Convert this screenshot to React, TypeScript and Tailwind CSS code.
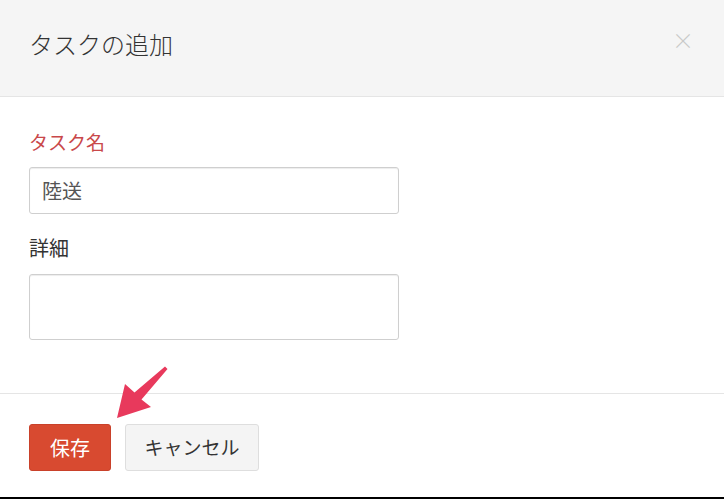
import React from 'react';

const jp = { fontFamily: '"Noto Sans CJK JP", "Noto Sans", sans-serif' };

function PointerArrow() {
  return (
    <svg
      className="absolute left-0 top-0 pointer-events-none"
      width="724"
      height="499"
      viewBox="0 0 724 499"
    >
      <polygon
        points="117,418 125,384 134.5,392.5 165,366.5 167.5,369 141.5,399.5 151,407"
        fill="#e8395c"
      />
    </svg>
  );
}

function App() {
  return (
    <div
      className="relative w-[724px] h-[499px] bg-white flex flex-col border-b-2 border-black overflow-hidden"
      style={jp}
    >
      {/* Header */}
      <header className="h-[97px] shrink-0 bg-[#f5f5f5] border-b border-[#e5e5e5] flex items-start justify-between pl-[29px] pr-[30px]">
        <h1 className="mt-[27px] text-[24px] leading-[34px] font-light text-[#333]">
          タスクの追加
        </h1>
        <button className="mt-[24px] text-[22px] leading-[30px] text-[#c8c8c8] font-light">
          ×
        </button>
      </header>

      {/* Body */}
      <div className="flex-1 pl-[29px] pt-[31px]">
        <label className="block text-[19px] leading-[28px] text-[#c9484a]">タスク名</label>
        <div className="mt-[11px] w-[370px] h-[47px] border border-[#cfcfcf] rounded-[3px] shadow-[inset_0_1px_1px_rgba(0,0,0,0.075)] flex items-center px-[12px] text-[20px] text-[#555]">
          陸送
        </div>
        <label className="block mt-[19px] text-[20px] leading-[29px] text-[#333]">詳細</label>
        <div className="mt-[12px] w-[370px] h-[66px] border border-[#cfcfcf] rounded-[3px] shadow-[inset_0_1px_1px_rgba(0,0,0,0.075)]" />
      </div>

      {/* Footer */}
      <footer className="h-[104px] shrink-0 border-t border-[#e5e5e5] pl-[29px] pt-[30px] flex items-start gap-[14px]">
        <button className="w-[82px] h-[47px] rounded-[3px] bg-[#d84a30] border border-[#c9412a] text-white text-[20px]">
          保存
        </button>
        <button className="w-[134px] h-[47px] rounded-[3px] bg-[#f4f4f4] border border-[#dedede] text-[#333] text-[19px]">
          キャンセル
        </button>
      </footer>

      <PointerArrow />
    </div>
  );
}

export default App;
